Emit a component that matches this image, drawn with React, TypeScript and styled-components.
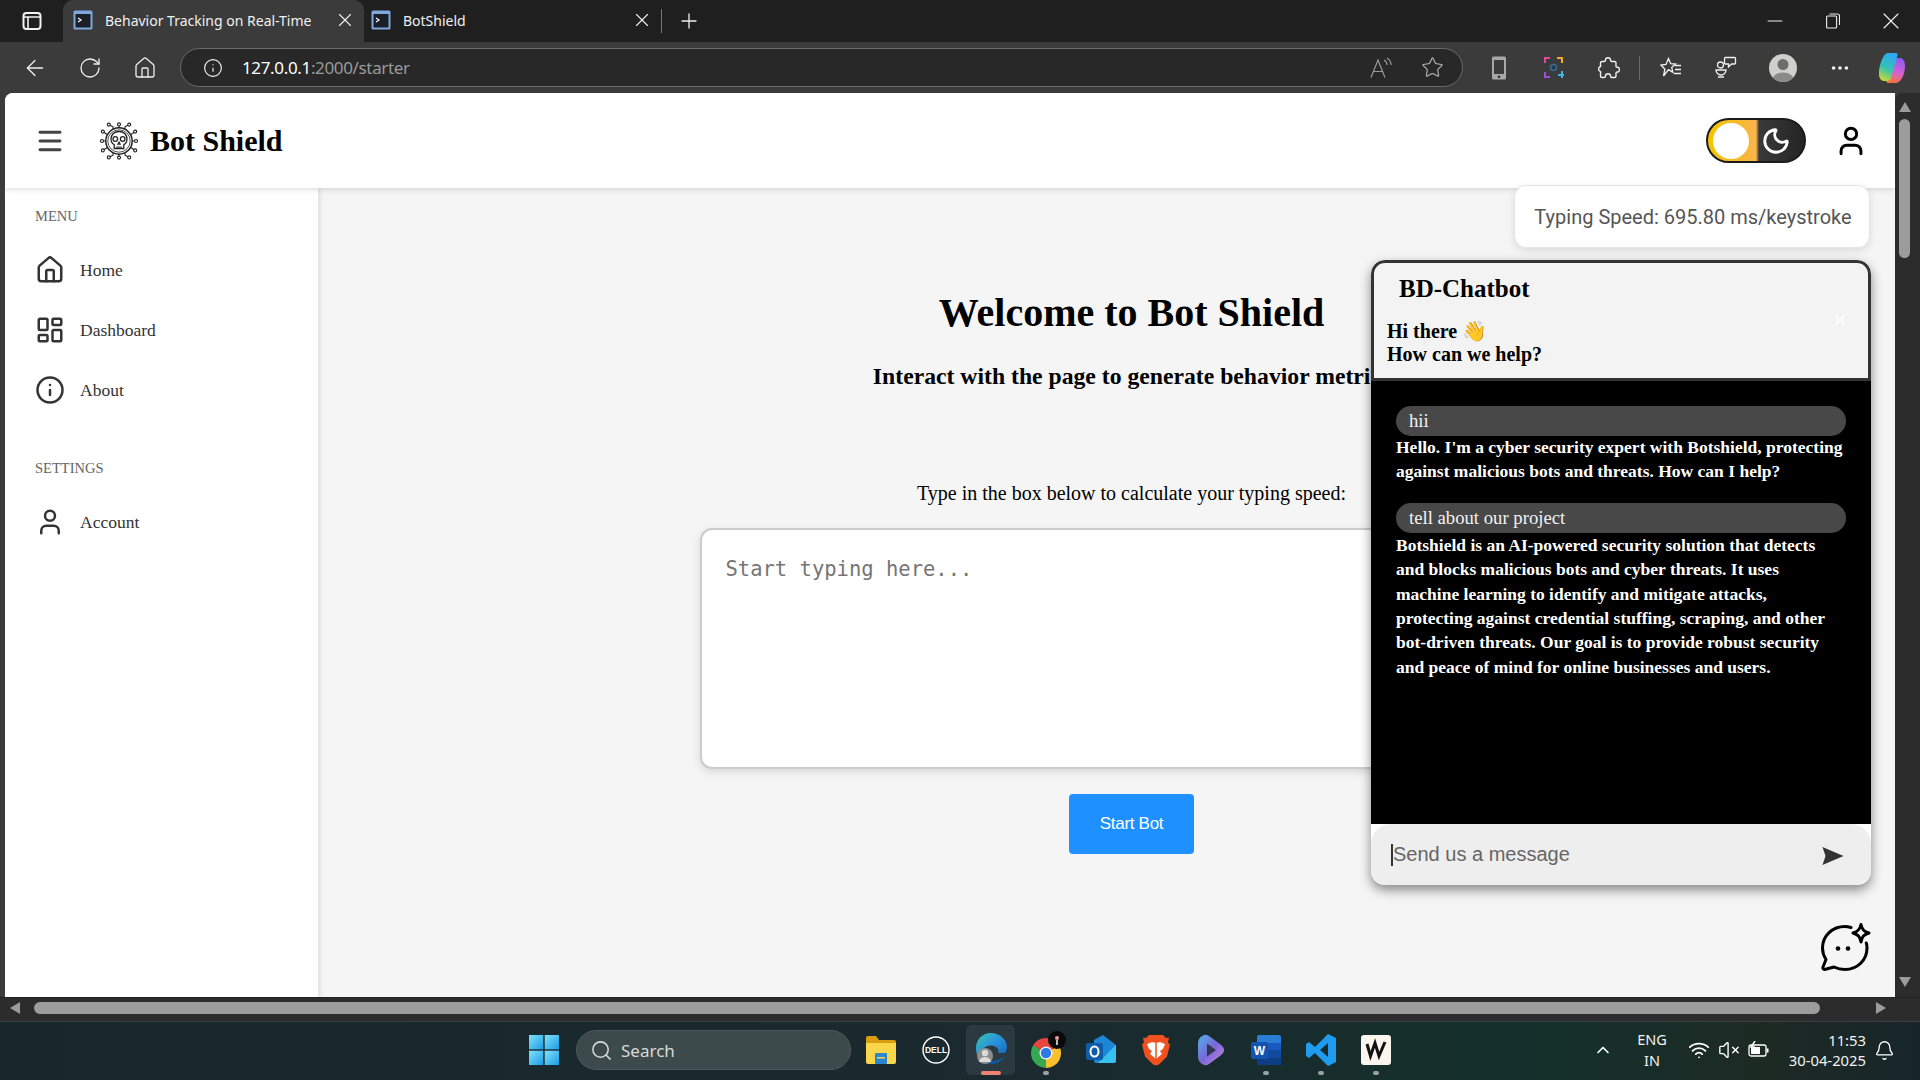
import React from 'react';
import styled, { createGlobalStyle } from 'styled-components';
import { ArrowLeft, RotateCw, House, Info, Star, LayoutDashboard, User, Moon, Menu, X, Plus, Minus, ChevronUp, Bell, Search as SearchIcon, Ellipsis, VolumeX, Wifi } from 'lucide-react';

const Global = createGlobalStyle`
  html, body { margin: 0; padding: 0; width: 1920px; height: 1080px; overflow: hidden; background: #1f1f1f; }
  * { box-sizing: border-box; }
`;

const Desktop = styled.div`
  width: 1920px; height: 1080px; display: flex; flex-direction: column;
  font-family: "Liberation Serif", serif;
`;

/* ---------- browser frame ---------- */
const TabStrip = styled.div`
  height: 42px; background: #1f1f1f; display: flex; align-items: center; color: #f0f0f0;
`;
const TabGroupButton = styled.div`
  width: 63px; height: 42px; display: flex; align-items: center; justify-content: center;
`;
const Tab = styled.div<{ $active?: boolean }>`
  height: 42px; width: ${p => (p.$active ? '301px' : '298px')};
  padding: 0 ${p => (p.$active ? '8px' : '9px')} 2px ${p => (p.$active ? '10px' : '7px')};
  background: ${p => (p.$active ? '#3b3b3b' : 'transparent')};
  border-radius: 10px 10px 0 0;
  display: flex; align-items: center; gap: 12px;
  font: 14px "Noto Sans", sans-serif;
`;
const TabTitle = styled.span`flex: 1; white-space: nowrap; overflow: hidden;`;
const TabDivider = styled.div`width: 1px; height: 24px; background: #777; margin-left: -1px;`;
const NewTab = styled.div`width: 54px; display: flex; justify-content: center;`;
const WindowControls = styled.div`margin-left: auto; display: flex; align-items: center;`;
const WindowButton = styled.div`width: 58px; height: 42px; display: flex; align-items: center; justify-content: center;`;

const Toolbar = styled.div`
  height: 51px; background: #3b3b3b; display: flex; align-items: center; padding-left: 7px;
`;
const ToolButton = styled.div<{ $w?: number }>`
  width: ${p => p.$w ?? 55}px; height: 40px; display: flex; align-items: center; justify-content: center; flex: none;
`;
const AddressBar = styled.div`
  margin-left: 8px; margin-right: 8px; width: 1283px; height: 39px; background: #282828;
  border: 1px solid #6a6a6a; border-radius: 20px; display: flex; align-items: center; padding-left: 22px;
  font: 17px "Noto Sans", sans-serif; letter-spacing: -0.35px; color: #fff;
`;
const UrlHost = styled.span`margin-left: 19px;`;
const UrlRest = styled.span`color: #9a9a9a;`;
const AddressActions = styled.div`margin-left: auto; display: flex; align-items: center; padding-right: 5px;`;
const ToolSeparator = styled.div`width: 1px; height: 24px; background: #6b6b6b; margin: 0 3px 0 3px; flex: none;`;
const Avatar = styled.div`
  width: 28px; height: 28px; border-radius: 50%; background: #cfcfcb; overflow: hidden; display: block;
`;

/* ---------- viewport ---------- */
const Viewport = styled.div`
  flex: 1; background: #3b3b3b; display: flex; flex-direction: column; min-height: 0;
`;
const ViewRow = styled.div`height: 904px; display: flex; padding-left: 5px;`;
const Page = styled.div`
  position: relative; width: 1890px; height: 904px; background: #f5f5f5; border-radius: 8px 0 0 0;
  overflow: hidden; display: flex; flex-direction: column;
`;
const VScroll = styled.div`
  width: 25px; background: #2c2c2c; border-radius: 8px 0 0 0; padding: 9px 8px 0 2px; display: flex; flex-direction: column; align-items: center;
`;
const ScrollArrow = styled.div<{ $dir: 'up' | 'down' | 'left' | 'right' }>`
  width: 0; height: 0; flex: none;
  ${p => p.$dir === 'up' && 'border-left: 6px solid transparent; border-right: 6px solid transparent; border-bottom: 10px solid #9c9c9c;'}
  ${p => p.$dir === 'down' && 'border-left: 6px solid transparent; border-right: 6px solid transparent; border-top: 10px solid #9c9c9c;'}
  ${p => p.$dir === 'left' && 'border-top: 6px solid transparent; border-bottom: 6px solid transparent; border-right: 10px solid #9c9c9c;'}
  ${p => p.$dir === 'right' && 'border-top: 6px solid transparent; border-bottom: 6px solid transparent; border-left: 10px solid #9c9c9c;'}
`;
const VThumb = styled.div`width: 11px; height: 139px; margin: 7px 0 719px; background: #9c9c9c; border-radius: 6px; flex: none;`;
const HScroll = styled.div`
  height: 24px; background: #2c2c2c; display: flex; align-items: center; padding: 0 0 3px 10px; border-top: 1px solid #222;
`;
const HThumb = styled.div`width: 1786px; height: 12px; margin: 0 56px 0 14px; background: #9c9c9c; border-radius: 6px; flex: none;`;

/* ---------- app header ---------- */
const Header = styled.header`
  height: 95px; background: #fff; display: flex; align-items: center; padding: 0 27px 0 30px;
  box-shadow: 0 2px 5px rgba(0,0,0,.12); position: relative; z-index: 2; flex: none;
`;
const MenuButton = styled.div`width: 32px; height: 32px; color: #444; display: flex; align-items: center; justify-content: center; margin-left: -1px; margin-right: 1px;`;
const LogoWrap = styled.div`margin-left: 33px; width: 38px; height: 38px; flex: none;`;
const Brand = styled.div`margin-left: 12px; font-weight: 700; font-size: 30px; color: #000;`;
const ThemeToggle = styled.div`
  margin-left: auto; width: 100px; height: 45px; border-radius: 23px; border: 2px solid #1c1c1c;
  background: linear-gradient(to right, #f4c400 0%, #f9b44a 50%, #3a3a3a 53%, #242424 100%);
  display: flex; align-items: center; padding-left: 5px; gap: 12px; color: #fff;
`;
const Knob = styled.div`width: 36px; height: 36px; border-radius: 50%; background: #fff; flex: none;`;
const ProfileButton = styled.div`margin-left: 28px; color: #000; display: flex;`;

/* ---------- layout under header ---------- */
const Body = styled.div`flex: 1; display: flex; min-height: 0;`;
const Sidebar = styled.aside`
  width: 313px; flex: none; background: #fff; padding: 20px 0 0 30px;
  box-shadow: 2px 0 5px rgba(0,0,0,.1);
`;
const SideHeading = styled.div<{ $top?: number }>`
  font-size: 14.5px; line-height: 17px; color: #666; margin-top: ${p => p.$top ?? 0}px;
`;
const SideItem = styled.div`
  height: 60px; display: flex; align-items: center; gap: 15px; font-size: 17.5px; color: #333;
`;
const SideList = styled.div<{ $top: number }>`margin-top: ${p => p.$top}px;`;

const Main = styled.main`
  flex: 1; display: flex; flex-direction: column; align-items: center; padding: 102px 0 0 50px; color: #000;
`;
const Title = styled.h1`margin: 0; font-size: 40px; line-height: 46px; font-weight: 700; white-space: nowrap;`;
const Subtitle = styled.h2`
  margin: 27px 0 0; font-size: 23.7px; line-height: 26px; font-weight: 700; white-space: nowrap;
`;
const Prompt = styled.p`margin: 92px 0 0; font-size: 20px; line-height: 24px; white-space: nowrap;`;
const TypingBox = styled.textarea`
  margin-top: 23px; width: 864px; height: 241px; flex: none; resize: none; border: 2px solid #ccc; border-radius: 12px;
  background: #fff; padding: 27px 24px; font: 20.5px/1.2 "DejaVu Sans Mono", monospace; outline: none;
  box-shadow: 0 3px 8px rgba(0,0,0,.12);
  &::placeholder { color: #757575; }
`;
const StartButton = styled.button`
  margin-top: 25px; width: 125px; height: 60px; border: 0; border-radius: 4px; background: #1e90ff; color: #fff;
  font: 17px "Liberation Sans", sans-serif; letter-spacing: -.3px;
`;

/* ---------- overlays ---------- */
const SpeedToast = styled.div`
  position: absolute; z-index: 3; right: 25px; top: 92px; width: 356px; height: 63px; background: #fff;
  border: 1px solid #e4e4e4; border-radius: 12px; box-shadow: 0 3px 8px rgba(0,0,0,.1); padding-left: 2px;
  display: flex; align-items: center; justify-content: center; font: 20px Roboto, sans-serif; color: #555; white-space: nowrap;
`;
const Chat = styled.section`
  position: absolute; z-index: 3; right: 24px; top: 167px; width: 500px; height: 625px; display: flex; flex-direction: column;
  border-radius: 14px; overflow: hidden; background: #fff; box-shadow: 0 5px 12px rgba(0,0,0,.45);
`;
const ChatHeader = styled.div`
  position: relative; height: 121px; flex: none; background: #f3f3f3; border: 3px solid #333; border-radius: 14px 14px 0 0;
  padding: 11px 0 0 13px; color: #000; font-weight: 700;
`;
const ChatName = styled.div`font-size: 25px; line-height: 29px; margin-left: 12px;`;
const ChatGreeting = styled.div`margin-top: 17px; font-size: 20px; line-height: 23px;`;
const ChatClose = styled.div`position: absolute; right: 20px; top: 49px; color: #fff; display: flex;`;
const ChatLog = styled.div`
  flex: 1; background: #000; padding: 25px 25px 0; color: #fff; display: flex; flex-direction: column;
`;
const UserBubble = styled.div`
  height: 30px; flex: none; background: #484848; border-radius: 15px; padding-left: 13px; font-size: 18.7px; line-height: 30px; color: #f2f2f2;
`;
const BotReply = styled.div<{ $top: number }>`
  margin: ${p => p.$top}px 0 19px; font-size: 17.5px; line-height: 24.4px; font-weight: 700; color: #fff;
`;
const ChatInputRow = styled.div`
  height: 61px; flex: none; background: #eee; border-radius: 20px 20px 16px 16px; display: flex; align-items: center; padding: 0 27px 0 20px;
`;
const Caret = styled.div`width: 2px; height: 22px; background: #333; flex: none;`;
const ChatInput = styled.input`
  flex: 1; border: 0; outline: 0; background: transparent; padding: 0; font: 20px "Liberation Sans", sans-serif; color: #333;
  &::placeholder { color: #666; }
`;
const SendWrap = styled.div`display: flex; margin-top: 2px;`;
const Launcher = styled.div`position: absolute; z-index: 3; right: 24px; bottom: 26px; display: flex;`;

/* ---------- taskbar ---------- */
const Taskbar = styled.footer`
  height: 59px; flex: none; border-top: 1px solid #3a3f40; padding-bottom: 2px;
  background: linear-gradient(to right, #18272c 0%, #1a2a2f 55%, #14302b 80%, #1d2a24 92%, #17252a 100%);
  display: flex; align-items: center; padding-left: 529px; color: #fff; font-family: "Noto Sans", sans-serif;
`;
const StartGlyph = styled.div`width: 30px; height: 30px; flex: none; display: flex;`;
const SearchPill = styled.div`
  margin-left: 17px; width: 275px; height: 40px; border-radius: 20px; background: #3d4a4c; border: 1px solid #4d595b;
  display: flex; align-items: center; gap: 8px; padding-left: 13px; font-size: 17px; color: #d8d8d8;
`;
const PinnedRow = styled.div`margin-left: 2px; display: flex; align-items: center;`;
const Pinned = styled.div<{ $active?: boolean }>`
  position: relative; width: 55px; height: 50px; display: flex; align-items: center; justify-content: center;
  border-radius: 5px;
  ${p => p.$active && 'background: #2a3a40; width: 49px; margin: 0 3px;'}
`;
const RunDot = styled.span<{ $active?: boolean }>`
  position: absolute; bottom: 0; left: 50%; transform: translateX(-50%);
  width: ${p => (p.$active ? '20px' : '6px')}; height: 4px; border-radius: 2px;
  background: ${p => (p.$active ? '#ef8272' : '#9aa2a4')};
`;
const Tray = styled.div`margin-left: auto; display: flex; align-items: center;`;
const TrayText = styled.div`
  width: 50px; text-align: center; font-size: 14.5px; line-height: 21px; margin: 0 7px 0 14px; color: #f2f2f2;
`;
const TrayIcon = styled.div`width: 30px; display: flex; justify-content: center;`;
const Clock = styled.div`width: 92px; text-align: right; font-size: 14.8px; line-height: 20px; color: #f2f2f2; white-space: nowrap;`;
const BellWrap = styled.div`width: 54px; padding-left: 8px; display: flex;`;

/* ---------- drawings ---------- */
const Favicon = () => (
  <svg width="20" height="20" viewBox="0 0 20 20">
    <rect x="0.5" y="0.5" width="19" height="19" rx="1.5" fill="#7fa8dc" />
    <rect x="2.5" y="4" width="15" height="13.5" fill="#1b1f27" />
    <path d="M5 8l3 2-3 2" stroke="#fff" strokeWidth="1.2" fill="none" />
  </svg>
);
const SidePanelIcon = () => (
  <svg width="20" height="20" viewBox="0 0 20 20" fill="none" stroke="#f2f2f2" strokeWidth="2">
    <rect x="1.5" y="2" width="17" height="16" rx="3" />
    <path d="M1.5 6h17M6 6v12" strokeWidth="1.6" />
  </svg>
);
const RestoreIcon = () => (
  <svg width="14" height="16" viewBox="0 0 14 16" fill="none" stroke="#f0f0f0" strokeWidth="1.1">
    <rect x="0.6" y="3" width="10" height="12" rx="1" />
    <path d="M3.5 1h8a2 2 0 0 1 2 2v9" />
  </svg>
);
const ReadAloud = () => (
  <svg width="24" height="22" viewBox="0 0 24 22" fill="none" stroke="#9a9a9a" strokeWidth="1.2">
    <path d="M1 20.5 8 3l7 17.5M3.5 14.5h9" />
    <path d="M14 3c2 1 3 3 3 5M17 1c2.5 1.5 4 4 4 7" />
  </svg>
);
const PhoneIcon = () => (
  <svg width="16" height="24" viewBox="0 0 16 24">
    <rect x="1" y="0.5" width="14" height="23" rx="1.5" fill="#a8a8a8" />
    <rect x="3" y="4" width="10" height="14" fill="#3b3b3b" />
    <circle cx="8" cy="20.8" r="1.4" fill="#333" />
  </svg>
);
const ScreenshotIcon = () => (
  <svg width="20" height="22" viewBox="0 0 20 22" fill="none" strokeWidth="2">
    <path d="M1 6V1h5" stroke="#e3479a" />
    <path d="M13 1h5v5" stroke="#f5a623" />
    <path d="M1 15v5h5" stroke="#9a4ee0" />
    <path d="M18 14v7M14 18h6" stroke="#3fb6e8" />
    <circle cx="9.5" cy="10.5" r="3" stroke="#3d6e96" strokeWidth="1.4" fill="#22394d" />
  </svg>
);
const ExtensionIcon = () => (
  <svg width="23" height="24" viewBox="0 0 23 24" fill="none" stroke="#f0f0f0" strokeWidth="1.4" strokeLinejoin="round">
    <path d="M8.5 4C8.5 1 13.5 1 13.5 4c0 1 .5 1.500 1.500 1.500h2.500A1.500 1.500 0 0 1 19 7v3c0 1 .5 1.500 1.500 1.300 2.500-.3 2.500 5 0 4.700-1-.2-1.500.3-1.500 1.300V20a1.500 1.500 0 0 1-1.500 1.500H15c-1 0-1.500-.5-1.500-1.500 0-3-5-3-5 0 0 1-.5 1.500-1.500 1.500H5A1.500 1.500 0 0 1 3.500 20v-2.500c0-1 .5-1.500 0-1.800C1 15 1 11 3.500 10.500c.5-.1 0-.5 0-1.500V7A1.500 1.500 0 0 1 5 5.500h2c1 0 1.500-.5 1.500-1.500z" />
  </svg>
);
const FavsIcon = () => (
  <svg width="22" height="22" viewBox="0 0 22 22" fill="none" stroke="#f0f0f0" strokeWidth="1.3">
    <path d="M8.5 1.5l2.2 5.2 4.8.4-3.8 3.3 1.2 5-4.4-2.8L3.5 19l1.4-6.8L1 8l5-.6z" />
    <path d="M15 8.5h6M15 12.5h6M14 16.5h7" />
  </svg>
);
const FeedbackIcon = () => (
  <svg width="22" height="24" viewBox="0 0 22 24" fill="none" stroke="#f0f0f0" strokeWidth="1.3">
    <circle cx="5.5" cy="9" r="3" />
    <path d="M1 14h10a5 5 0 0 1-10 0zM3 21h6" />
    <path d="M10.5 1.5h9a1 1 0 0 1 1 1V7a1 1 0 0 1-1 1h-3l-3 3V8h-3a1 1 0 0 1-1-1V2.500a1 1 0 0 1 1-1z" />
  </svg>
);
const AvatarFigure = () => (
  <svg width="28" height="28" viewBox="0 0 28 28" style={{ display: 'block' }}>
    <circle cx="14" cy="10.5" r="5.5" fill="#6d6d6b" />
    <ellipse cx="14" cy="26" rx="11" ry="7.5" fill="#8a8a88" />
  </svg>
);
const CopilotLogo = () => (
  <svg width="28" height="32" viewBox="0 0 28 32">
    <defs>
      <linearGradient id="cpa" x1="0.6" y1="0" x2="0.3" y2="1"><stop offset="0" stopColor="#2ea7f5" /><stop offset=".55" stopColor="#35c2b0" /><stop offset="1" stopColor="#c5dc35" /></linearGradient>
      <linearGradient id="cpb" x1="0.6" y1="0" x2="0.4" y2="1"><stop offset="0" stopColor="#8c5cf0" /><stop offset=".55" stopColor="#d65fd8" /><stop offset="1" stopColor="#f5713f" /></linearGradient>
    </defs>
    <path d="M18 6h4c3 0 5 3 5 8 0 8-4 17-9 17h-8c-1 0-2-1-1.500-2.500L15 8c.5-1.500 1.500-2 3-2z" fill="url(#cpb)" />
    <path d="M10 1h8c1 0 2 1 1.500 2.500L13 26c-.5 2-2 3-4 3H6c-3 0-5-3-5-7 0-8 4-21 9-21z" fill="url(#cpa)" />
  </svg>
);
const SkullLogo = () => (
  <svg width="38" height="38" viewBox="0 0 38 38" fill="none" stroke="#222" strokeWidth="1.1">
    <circle cx="19" cy="19" r="13.2" strokeWidth="1.5" />
    <circle cx="19" cy="19" r="11.2" strokeWidth=".8" />
    <path d="M19 9.5c-5.2 0-8 3.500-8 7.500 0 3 1.300 4.600 3.200 5.600v3.900h9.600v-3.900c1.900-1 3.200-2.600 3.200-5.600 0-4-2.800-7.500-8-7.500z" strokeWidth="1.3" />
    <circle cx="15.3" cy="17" r="2.3" strokeWidth="1.3" /><circle cx="22.7" cy="17" r="2.3" strokeWidth="1.3" />
    <path d="M19 20l-1.2 2.200h2.400zM17 26.500v-2.300M19 26.500v-2.300M21 26.500v-2.300" />
    <path d="M19 5.800V3M13 7.200V4.800L9.500 3M25 7.200V4.800L28.500 3M7.200 12.500 3.500 10M30.800 12.500l3.700-2.500M5.800 19H2.800M32.200 19h3M7.200 25.500 3.500 28M30.800 25.500l3.700 2.500M19 32.200V35M13 30.800v2.400L9.500 35M25 30.800v2.400L28.500 35" />
    {[[19,2.4],[8.8,2.6],[29.2,2.6],[2.8,9.6],[35.2,9.6],[2,19],[36,19],[2.8,28.4],[35.2,28.4],[19,35.6],[8.8,35.4],[29.2,35.4]].map(([x,y],i)=>(
      <circle key={i} cx={x} cy={y} r="1.5" fill="#fff" />
    ))}
  </svg>
);
const SendIcon = () => (
  <svg width="22" height="18" viewBox="0 0 22 18"><path d="M0.5 0 21.5 9 0.5 18 3.5 9z" fill="#333" /></svg>
);
const ChatSpark = () => (
  <svg width="50" height="48" viewBox="0 0 50 48" fill="none" stroke="#000" strokeWidth="3" strokeLinecap="round" strokeLinejoin="round">
    <path d="M30 4.500C27.500 3.800 26 3.500 24 3.500 11.500 3.500 1.500 12.500 1.500 25c0 4.500 1.400 8.300 3.500 11.500L2 44c-.5 1.500.7 2.700 2.500 2.300l8.500-2.300c3.400 1.700 7 2.500 11 2.500 12.500 0 22-9.500 22-21.500 0-2-.2-3.500-.7-5" />
    <path d="M40 1.500c1 5 2.800 7 8 8.500-5.200 1.500-7 3.500-8 9-1-5.500-3-7.500-8-9 5-1.500 7-3.500 8-8.500z" />
    <circle cx="17" cy="25.5" r="2.3" fill="#000" stroke="none" />
    <circle cx="27" cy="25.5" r="2.3" fill="#000" stroke="none" />
  </svg>
);
const WinLogo = () => (
  <svg width="30" height="30" viewBox="0 0 30 30">
    <defs><linearGradient id="wl" x1="0" y1="0" x2="1" y2="1"><stop offset="0" stopColor="#7fe3f7" /><stop offset="1" stopColor="#1c9be8" /></linearGradient></defs>
    <rect width="14.3" height="14.3" fill="url(#wl)" /><rect x="15.7" width="14.3" height="14.3" fill="url(#wl)" />
    <rect y="15.7" width="14.3" height="14.3" fill="url(#wl)" /><rect x="15.7" y="15.7" width="14.3" height="14.3" fill="url(#wl)" />
  </svg>
);
const FolderIcon = () => (
  <svg width="30" height="28" viewBox="0 0 30 28">
    <path d="M0 2a2 2 0 0 1 2-2h8l3 4h15a2 2 0 0 1 2 2v4H0z" fill="#d99e10" />
    <path d="M0 7h30v19a2 2 0 0 1-2 2H2a2 2 0 0 1-2-2z" fill="#fbd54a" />
    <rect x="9" y="17" width="12" height="11" rx="1" fill="#2a86d1" /><rect x="11" y="21" width="8" height="1.5" fill="#fbd54a" />
  </svg>
);
const DellIcon = () => (
  <svg width="28" height="28" viewBox="0 0 28 28">
    <circle cx="14" cy="14" r="13" fill="none" stroke="#fff" strokeWidth="1.4" />
    <text x="14" y="17" fontSize="8.5" fontWeight="700" fontFamily="Liberation Sans, sans-serif" textAnchor="middle" fill="#fff">DELL</text>
  </svg>
);
const EdgeIcon = () => (
  <svg width="32" height="36" viewBox="0 0 32 36">
    <defs><linearGradient id="ed" x1="0" y1="0" x2="1" y2="1"><stop offset="0" stopColor="#38c4b5" /><stop offset=".5" stopColor="#2a90dc" /><stop offset="1" stopColor="#0a5ea8" /></linearGradient></defs>
    <path d="M16 1C7 1 1 8 1 16c0 6 2 10 6 13-2-4-2-10 2-13 4-3 8-3 12-1 3 2 3 5 2 6h7c1.5-2 2-4 2-6C32 8 25 1 16 1z" fill="url(#ed)" />
    <path d="M30 24c-3 5-8 8-13 8-2 0-5-1-7-3 5 1 14 0 20-5z" fill="#0c59a4" />
    <circle cx="10" cy="24" r="8" fill="#8d8d8d" /><circle cx="10" cy="21" r="3.2" fill="#d9d9d9" /><path d="M4 30a6 5 0 0 1 12 0z" fill="#d9d9d9" />
  </svg>
);
const ChromeIcon = () => (
  <svg width="40" height="40" viewBox="0 0 40 40" fill="none">
    <g strokeWidth="9">
      <circle cx="20" cy="23" r="10.5" stroke="#e8453c" strokeDasharray="22 44" transform="rotate(-150 20 23)" />
      <circle cx="20" cy="23" r="10.5" stroke="#fbc02d" strokeDasharray="22 44" transform="rotate(-30 20 23)" />
      <circle cx="20" cy="23" r="10.5" stroke="#34a853" strokeDasharray="22 44" transform="rotate(90 20 23)" />
    </g>
    <circle cx="20" cy="23" r="6.5" fill="#fff" /><circle cx="20" cy="23" r="5.2" fill="#2f78e8" />
    <circle cx="31" cy="10" r="9" fill="#0a0a0a" />
    <circle cx="31" cy="8" r="2" fill="#e8a0a0" /><rect x="30" y="10" width="2" height="5" fill="#bbb" />
  </svg>
);
const OutlookIcon = () => (
  <svg width="30" height="30" viewBox="0 0 30 30">
    <path d="M8 5l9-5 13 10v16a2 2 0 0 1-2 2H10a2 2 0 0 1-2-2z" fill="#1e86d6" />
    <path d="M30 10v16a2 2 0 0 1-2 2H12z" fill="#36c1ee" />
    <rect x="0" y="8" width="17" height="17" rx="2" fill="#0f5ca8" />
    <ellipse cx="8.5" cy="16.5" rx="4" ry="5" fill="none" stroke="#fff" strokeWidth="2" />
  </svg>
);
const BraveIcon = () => (
  <svg width="28" height="32" viewBox="0 0 28 32">
    <path d="M7 1h14l3 3 3-.5-1 5 2 2-3 12-8 8-3 1-3-1-8-8-3-12 2-2-1-5 3 .5z" fill="#f1501f" />
    <path d="M5 10l5-2 4 1 4-1 5 2-2 5-3 2 2 3-6 5-6-5 2-3-3-2z" fill="#fff" />
    <path d="M14 9v16" stroke="#f1501f" strokeWidth="1.5" />
  </svg>
);
const BingIcon = () => (
  <svg width="26" height="32" viewBox="0 0 26 32">
    <defs><linearGradient id="bi" x1="0" y1="0" x2="1" y2="1"><stop offset="0" stopColor="#4fb0e8" /><stop offset=".5" stopColor="#7a68d8" /><stop offset="1" stopColor="#c98ae0" /></linearGradient></defs>
    <path d="M5 1.500c2-1.200 4-1 6 .5l11 8c3 2.500 4 4 4 6s-1 3.500-4 6L11 30c-2 1.500-4 1.700-6 .5-3-1.500-5-4-5-8v-13C0 5.500 2 3 5 1.500z" fill="url(#bi)" />
    <path d="M9 9.500l9 6.500-9 6.500z" fill="#2a3040" opacity=".9" />
  </svg>
);
const WordIcon = () => (
  <svg width="30" height="30" viewBox="0 0 30 30">
    <rect x="6" y="0" width="24" height="30" rx="2" fill="#2b7cd3" /><rect x="6" y="8" width="24" height="7" fill="#185abd" />
    <rect x="6" y="15" width="24" height="8" fill="#124a9e" /><rect x="6" y="23" width="24" height="7" fill="#0e3d86" />
    <rect x="0" y="7" width="17" height="17" rx="2" fill="#1453b0" />
    <text x="8.5" y="20" fontSize="12" fontWeight="700" fontFamily="Liberation Sans, sans-serif" textAnchor="middle" fill="#fff">W</text>
  </svg>
);
const VSCodeIcon = () => (
  <svg width="30" height="32" viewBox="0 0 30 32">
    <path d="M22 0l8 4v24l-8 4-13-13-6 5-3-2v-12l3-2 6 5zM22 9l-8 7 8 7z" fill="#1f9cf0" />
  </svg>
);
const WTile = () => (
  <svg width="30" height="30" viewBox="0 0 30 30">
    <rect width="30" height="30" rx="3" fill="#faf6ee" />
    <path d="M6 9l3.5 12 4.5-13 4 13 6-14" stroke="#111" strokeWidth="3" fill="none" />
  </svg>
);
const BatteryIcon = () => (
  <svg width="22" height="18" viewBox="0 0 22 18" fill="none" stroke="#fff" strokeWidth="1.3">
    <rect x="1" y="4" width="17" height="11" rx="2" />
    <rect x="3" y="6" width="9" height="7" fill="#fff" stroke="none" />
    <path d="M19.5 7.5v4" strokeWidth="2" />
    <path d="M7 0 3 6h3l-1.5 4" strokeWidth="1.5" />
  </svg>
);

const lines = [
  "Botshield is an AI-powered security solution that detects",
  "and blocks malicious bots and cyber threats. It uses",
  "machine learning to identify and mitigate attacks,",
  "protecting against credential stuffing, scraping, and other",
  "bot-driven threats. Our goal is to provide robust security",
  "and peace of mind for online businesses and users.",
];

export default function App() {
  const light = '#f0f0f0';
  return (
    <>
      <Global />
      <Desktop>
        <TabStrip>
          <TabGroupButton><SidePanelIcon /></TabGroupButton>
          <Tab $active>
            <Favicon />
            <TabTitle>Behavior Tracking on Real-Time</TabTitle>
            <X size={22} strokeWidth={1.2} />
          </Tab>
          <Tab>
            <Favicon />
            <TabTitle>BotShield</TabTitle>
            <X size={22} strokeWidth={1.2} />
          </Tab>
          <TabDivider />
          <NewTab><Plus size={24} strokeWidth={1.3} /></NewTab>
          <WindowControls>
            <WindowButton><Minus size={24} strokeWidth={1} /></WindowButton>
            <WindowButton><RestoreIcon /></WindowButton>
            <WindowButton><X size={28} strokeWidth={1} /></WindowButton>
          </WindowControls>
        </TabStrip>
        <Toolbar>
          <ToolButton><ArrowLeft size={26} strokeWidth={1.2} color={light} /></ToolButton>
          <ToolButton><RotateCw size={24} strokeWidth={1.3} color={light} /></ToolButton>
          <ToolButton><House size={24} strokeWidth={1.3} color={light} /></ToolButton>
          <AddressBar>
            <Info size={20} strokeWidth={1.4} color={light} />
            <UrlHost>127.0.0.1<UrlRest>:2000/starter</UrlRest></UrlHost>
            <AddressActions>
              <ToolButton $w={50}><ReadAloud /></ToolButton>
              <ToolButton $w={50}><Star size={23} strokeWidth={1.2} color="#b5b5b5" /></ToolButton>
            </AddressActions>
          </AddressBar>
          <ToolButton><PhoneIcon /></ToolButton>
          <ToolButton><ScreenshotIcon /></ToolButton>
          <ToolButton><ExtensionIcon /></ToolButton>
          <ToolSeparator />
          <ToolButton><FavsIcon /></ToolButton>
          <ToolButton><FeedbackIcon /></ToolButton>
          <ToolButton $w={59}><Avatar><AvatarFigure /></Avatar></ToolButton>
          <ToolButton><Ellipsis size={22} strokeWidth={2} color={light} /></ToolButton>
          <ToolButton $w={50}><CopilotLogo /></ToolButton>
        </Toolbar>
        <Viewport>
          <ViewRow>
            <Page>
              <Header>
                <MenuButton><Menu size={30} strokeWidth={2.3} /></MenuButton>
                <LogoWrap><SkullLogo /></LogoWrap>
                <Brand>Bot Shield</Brand>
                <ThemeToggle>
                  <Knob />
                  <Moon size={30} strokeWidth={2.3} />
                </ThemeToggle>
                <ProfileButton><User size={34} strokeWidth={2.1} /></ProfileButton>
              </Header>
              <Body>
                <Sidebar>
                  <SideHeading>MENU</SideHeading>
                  <SideList $top={15}>
                    <SideItem><House size={30} strokeWidth={2} />Home</SideItem>
                    <SideItem><LayoutDashboard size={30} strokeWidth={2} />Dashboard</SideItem>
                    <SideItem><Info size={30} strokeWidth={2} />About</SideItem>
                  </SideList>
                  <SideHeading $top={40}>SETTINGS</SideHeading>
                  <SideList $top={15}>
                    <SideItem><User size={30} strokeWidth={2} />Account</SideItem>
                  </SideList>
                </Sidebar>
                <Main>
                  <Title>Welcome to Bot Shield</Title>
                  <Subtitle>Interact with the page to generate behavior metrics</Subtitle>
                  <Prompt>Type in the box below to calculate your typing speed:</Prompt>
                  <TypingBox readOnly placeholder="Start typing here..." />
                  <StartButton>Start Bot</StartButton>
                </Main>
              </Body>
              <SpeedToast>Typing Speed: 695.80 ms/keystroke</SpeedToast>
              <Chat>
                <ChatHeader>
                  <ChatName>BD-Chatbot</ChatName>
                  <ChatGreeting>Hi there 👋<br />How can we help?</ChatGreeting>
                  <ChatClose><X size={16} strokeWidth={3.4} /></ChatClose>
                </ChatHeader>
                <ChatLog>
                  <UserBubble>hii</UserBubble>
                  <BotReply $top={-1}>Hello. I'm a cyber security expert with Botshield, protecting<br />against malicious bots and threats. How can I help?</BotReply>
                  <UserBubble>tell about our project</UserBubble>
                  <BotReply $top={0}>{lines.map((l, i) => <React.Fragment key={i}>{l}<br /></React.Fragment>)}</BotReply>
                </ChatLog>
                <ChatInputRow>
                  <Caret />
                  <ChatInput placeholder="Send us a message" />
                  <SendWrap><SendIcon /></SendWrap>
                </ChatInputRow>
              </Chat>
              <Launcher><ChatSpark /></Launcher>
            </Page>
            <VScroll>
              <ScrollArrow $dir="up" />
              <VThumb />
              <ScrollArrow $dir="down" />
            </VScroll>
          </ViewRow>
          <HScroll>
            <ScrollArrow $dir="left" />
            <HThumb />
            <ScrollArrow $dir="right" />
          </HScroll>
        </Viewport>
        <Taskbar>
          <StartGlyph><WinLogo /></StartGlyph>
          <SearchPill><SearchIcon size={23} strokeWidth={1.6} />Search</SearchPill>
          <PinnedRow>
            <Pinned><FolderIcon /></Pinned>
            <Pinned><DellIcon /></Pinned>
            <Pinned $active><EdgeIcon /><RunDot $active /></Pinned>
            <Pinned><ChromeIcon /><RunDot /></Pinned>
            <Pinned><OutlookIcon /></Pinned>
            <Pinned><BraveIcon /></Pinned>
            <Pinned><BingIcon /></Pinned>
            <Pinned><WordIcon /><RunDot /></Pinned>
            <Pinned><VSCodeIcon /><RunDot /></Pinned>
            <Pinned><WTile /><RunDot /></Pinned>
          </PinnedRow>
          <Tray>
            <ChevronUp size={20} strokeWidth={2} />
            <TrayText>ENG<br />IN</TrayText>
            <TrayIcon><Wifi size={22} strokeWidth={2} /></TrayIcon>
            <TrayIcon><VolumeX size={22} strokeWidth={1.5} /></TrayIcon>
            <TrayIcon><BatteryIcon /></TrayIcon>
            <Clock>11:53<br />30-04-2025</Clock>
            <BellWrap><Bell size={21} strokeWidth={1.5} /></BellWrap>
          </Tray>
        </Taskbar>
      </Desktop>
    </>
  );
}
